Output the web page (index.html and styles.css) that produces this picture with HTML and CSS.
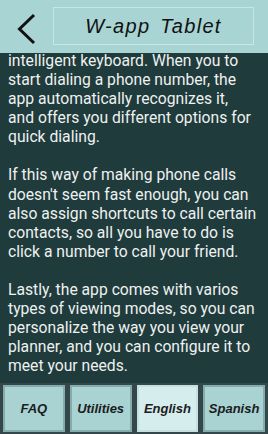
FILE: index.html
```html
<!DOCTYPE html>
<html lang="en">
<head>
    <meta charset="UTF-8">
    <meta name="viewport" content="width=device-width, initial-scale=1.0">
    <title>W-app Tablet</title>
    <link rel="stylesheet" href="styles.css">
</head>
<body>
    <div class="app">
        <header class="topbar">
            <a class="back" href="#" aria-label="Back">
                <svg width="20" height="32" viewBox="0 0 20 32">
                    <polyline points="17,2 2.5,16 17,30" fill="none" stroke="#111" stroke-width="3"/>
                </svg>
            </a>
            <div class="title">W-app Tablet</div>
        </header>

        <main class="content">
            <div class="text">
                <p>intelligent keyboard. When you to<br>
                start dialing a phone number, the<br>
                app automatically recognizes it,<br>
                and offers you different options for<br>
                quick dialing.</p>
                <p>If this way of making phone calls<br>
                doesn't seem fast enough, you can<br>
                also assign shortcuts to call certain<br>
                contacts, so all you have to do is<br>
                click a number to call your friend.</p>
                <p>Lastly, the app comes with varios<br>
                types of viewing modes, so you can<br>
                personalize the way you view your<br>
                planner, and you can configure it to<br>
                meet your needs.</p>
            </div>
        </main>

        <nav class="tabs">
            <button class="tab">FAQ</button>
            <button class="tab">Utilities</button>
            <button class="tab active">English</button>
            <button class="tab">Spanish</button>
        </nav>
    </div>
</body>
</html>
```

FILE: styles.css
```css
body {
    margin: 0;
    padding: 0;
    background-color: #1f3b3c;
}
.app {
    width: 268px;
    height: 434px;
    display: flex;
    flex-direction: column;
    overflow: hidden;
}
.topbar {
    height: 53px;
    box-sizing: border-box;
    padding: 7px 14px 8px 0;
    display: flex;
    background-color: #a8d4d3;
}
.back {
    width: 53px;
    display: flex;
    align-items: center;
    justify-content: center;
    padding-top: 6px;
    box-sizing: border-box;
}
.title {
    flex: 1;
    display: flex;
    align-items: center;
    justify-content: center;
    border: 1px solid #c6e7e6;
    font-family: "Liberation Sans", Arial, sans-serif;
    font-style: italic;
    font-size: 20px;
    letter-spacing: 1.3px;
    word-spacing: 3px;
    color: #111;
}
.content {
    flex: 1;
    overflow: hidden;
    background-color: #1f3b3c;
}
.text {
    margin-top: -2px;
    padding: 0 8px;
    font-family: Roboto, "Noto Sans", sans-serif;
    font-size: 15.7px;
    line-height: 19.1px;
    white-space: nowrap;
    color: #eef1f0;
}
.text p {
    margin: 0 0 19px 0;
}
.tabs {
    height: 51px;
    box-sizing: border-box;
    padding: 2px 3px;
    display: flex;
    gap: 5px;
    background-color: #34474a;
}
.tab {
    flex: 1;
    padding: 0;
    border: 2px solid #86abab;
    background-color: #a9d3d3;
    font-family: "Liberation Sans", Arial, sans-serif;
    font-style: italic;
    font-weight: bold;
    font-size: 13px;
    color: #1a2020;
}
.tab.active {
    background-color: #d6eded;
    border-color: #c4e0e0;
}
```
